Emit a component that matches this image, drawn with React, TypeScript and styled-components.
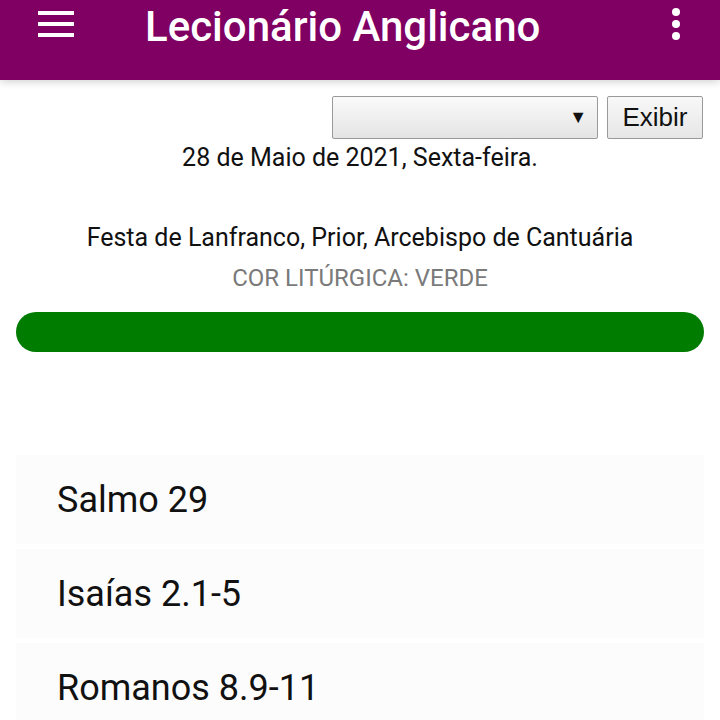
import React from "react";
import styled, { createGlobalStyle } from "styled-components";

const GlobalStyle = createGlobalStyle`
  body {
    margin: 0;
    background: #ffffff;
    font-family: Roboto, "Liberation Sans", Arial, sans-serif;
    color: #111;
  }
`;

const Page = styled.div`
  width: 720px;
  height: 720px;
  overflow: hidden;
`;

const AppBar = styled.header`
  height: 80px;
  background: #7f0062;
  box-shadow: 0 2px 8px rgba(0, 0, 0, 0.18);
  display: flex;
  align-items: flex-start;
  position: relative;
  z-index: 1;
`;

const MenuButton = styled.div`
  width: 36px;
  margin: 11px 0 0 38px;
  display: flex;
  flex-direction: column;
  gap: 7px;
`;

const MenuLine = styled.span`
  display: block;
  height: 4px;
  background: #fff;
`;

const Title = styled.h1`
  margin: 2px 0 0 71px;
  font-family: Roboto, "Liberation Sans", sans-serif;
  font-weight: 500;
  font-size: 42px;
  line-height: 50px;
  color: #fff;
  flex: 1;
`;

const Kebab = styled.div`
  margin: 8px 40px 0 0;
  display: flex;
  flex-direction: column;
  gap: 4px;
`;

const Dot = styled.span`
  width: 8px;
  height: 8px;
  border-radius: 50%;
  background: #fff;
`;

const Controls = styled.div`
  display: flex;
  justify-content: flex-end;
  gap: 9px;
  padding: 16px 17px 0 0;
`;

const Select = styled.div`
  width: 266px;
  height: 43px;
  box-sizing: border-box;
  border: 1px solid #9a9a9a;
  border-radius: 2px;
  background: linear-gradient(#fafafa, #e4e4e4);
  display: flex;
  align-items: center;
  justify-content: flex-end;
  padding-right: 10px;
  font-family: "Liberation Sans", Arial, sans-serif;
  font-size: 18px;
  color: #111;
`;

const Button = styled.div`
  width: 96px;
  height: 43px;
  box-sizing: border-box;
  border: 1px solid #9a9a9a;
  border-radius: 2px;
  background: linear-gradient(#f8f8f8, #e6e6e6);
  display: flex;
  align-items: center;
  justify-content: center;
  font-family: "Liberation Sans", Arial, sans-serif;
  font-size: 26px;
  color: #111;
`;

const Line = styled.p<{ $muted?: boolean; $top: number }>`
  margin: ${(p) => p.$top}px 0 0;
  text-align: center;
  font-size: ${(p) => (p.$muted ? 24 : 25)}px;
  line-height: 28px;
  color: ${(p) => (p.$muted ? "#7a7a7a" : "#111")};
`;

const ColorBar = styled.div<{ $color: string }>`
  margin: 20px 16px 0;
  height: 40px;
  border-radius: 20px;
  background: ${(p) => p.$color};
`;

const Readings = styled.ul`
  list-style: none;
  margin: 103px 16px 0;
  padding: 0;
  display: flex;
  flex-direction: column;
  gap: 5px;
`;

const Reading = styled.li`
  height: 89px;
  flex-shrink: 0;
  background: #fcfcfc;
  display: flex;
  align-items: center;
  padding-left: 41px;
  font-size: 36px;
  color: #111;
`;

const readings = ["Salmo 29", "Isaías 2.1-5", "Romanos 8.9-11"];

export default function App() {
  return (
    <Page>
      <GlobalStyle />
      <AppBar>
        <MenuButton>
          <MenuLine />
          <MenuLine />
          <MenuLine />
        </MenuButton>
        <Title>Lecionário Anglicano</Title>
        <Kebab>
          <Dot />
          <Dot />
          <Dot />
        </Kebab>
      </AppBar>
      <Controls>
        <Select>▼</Select>
        <Button>Exibir</Button>
      </Controls>
      <Line $top={5}>28 de Maio de 2021, Sexta-feira.</Line>
      <Line $top={52}>Festa de Lanfranco, Prior, Arcebispo de Cantuária</Line>
      <Line $top={12} $muted>
        COR LITÚRGICA: VERDE
      </Line>
      <ColorBar $color="#007d00" />
      <Readings>
        {readings.map((r) => (
          <Reading key={r}>{r}</Reading>
        ))}
      </Readings>
    </Page>
  );
}
